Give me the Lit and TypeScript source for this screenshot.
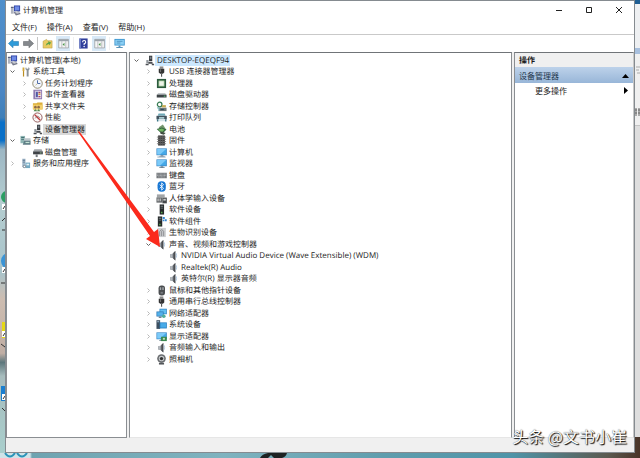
import { LitElement, html, css, svg, nothing } from "lit";
import { customElement, property } from "lit/decorators.js";
import { classMap } from "lit/directives/class-map.js";

/* Every glyph is drawn on a 12 x 12 grid. */
const speaker = svg`<path d="M2.500 4.500 5 4 8 1V11.500L5 8.800 2.500 8.300z" fill="#777b80"/><path d="M6 3 8 1V11.500L6 9.500z" fill="#4b4e52"/><path d="M2.500 4.500 5 4v4.800L2.500 8.300z" fill="#b4b9be"/><path d="M8.800 3.500q1.200 2.500 0 5" stroke="#a9c4dd" fill="none"/>`;
const usb = svg`<path d="M4 .500h4v2.500H4z" fill="#888"/><path d="M3 3h6v4L7.500 8.500h-3L3 7z" fill="#333"/><path d="M4.500 3.500h1v3h-1z" fill="#777"/><path d="M5.500 8.500h1.200v3.300H5.500z" fill="#555"/>`;
const tower = svg`<path d="M4 .500h4.800v11H4z" fill="#262a2b"/><path d="M5 2h2.800v1H5zM5 4h2.800v1H5z" fill="#7c8486"/><path d="M5.500 8.500H7V10H5.500z" fill="#58b04a"/>`;
const monitor = svg`<path d="M.500 1.500h11.300v7.500H.500z" fill="#3b87c4"/><path d="M1.300 2.300h9.700v5.900H1.300z" fill="#45a9e8"/><path d="M1.300 2.300h9.700L4.500 8.200H1.300z" fill="#7ccaf8"/><path d="M5 9h3v1h1.500v.900h-6V10H5z" fill="#6f8494"/>`;

const glyphs: Record<string, unknown> = {
  console: svg`<path d="M4.300 .500h6.700v6.500H4.300z" fill="#3247a8"/><path d="M5.300 1.500h4.700v4.300H5.300z" fill="#6f8ce6"/><path d="M1 2h3v7.500H1z" fill="#b0b4bf"/><path d="M1 2h3v1.200H1z" fill="#565d78"/><path d="M4 7.800 9 6.800l2.800 2.900L6.500 11.500z" fill="#74788a"/><path d="m6 6 4 2-1 1.500-3-.500z" fill="#c9cbd2"/>`,
  tools: svg`<path d="M2.800 1.500h2v4h-2z" fill="#d4a93c"/><path d="M3.200 5.500h1.300V11.500H3.200z" fill="#b98d22"/><path d="M6.500 1 7.300 3h1.600l.700-2 1 2.200-1.200 1.800V11.500H7.300V5L5.800 3.200z" fill="#8b9299"/>`,
  clock: svg`<circle cx="6" cy="6" r="5.200" fill="#f3f5fa" stroke="#8c8468" /><path d="M6 2.500V6h3" stroke="#3e5fa5" fill="none"/><path d="M6 6 3.800 8" stroke="#b9a75d" fill="none" stroke-width=".700"/>`,
  events: svg`<path d="M1.500 .800h9.500v10.400H1.500z" fill="#8f7bb0"/><path d="M3.500 2h6.500v8H3.500z" fill="#e3dff0"/><path d="M4.200 3h2.200v6H4.200z" fill="#5158a5"/><path d="M7 3h2.200v1.500H7zM7 7.500h2.200V9H7z" fill="#ad3f57"/><path d="M7 5h2.200v1.500H7z" fill="#d1a135"/>`,
  folder: svg`<path d="M1 2.500h4l1-1h5.500V9H1z" fill="#dcae3a"/><path d="M1 4h10.500v5.500H1z" fill="#f3cf6b"/><circle cx="3.700" cy="6.700" r="1.400" fill="#8e6a45"/><circle cx="7.200" cy="6.700" r="1.400" fill="#8e6a45"/><path d="M1.800 11.200q1.900-4.500 3.800 0zM5.500 11.200q1.700-4.500 3.400 0z" fill="#55884d"/>`,
  perf: svg`<circle cx="6" cy="6" r="5" fill="#fbf7f7" stroke="#8e5656"/><path d="m3 3 6 6" stroke="#c03b3b" stroke-width="1.500"/><path d="M3.500 7q2.500-4.500 5-.500" stroke="#7b6f6f" fill="none" stroke-width=".800"/>`,
  device: svg`<path d="M5.500 .800H9V6.800H5.500z" fill="#34373b"/><path d="M6.300 1.800h1.900v2.800H6.300z" fill="#77808a"/><path d="M2.500 5.500H5V9H2.500z" fill="#8f959b"/><path d="M1.800 9.500h3V7.500h4.500v2H11V11.200H8.500V9.500H5v1.700H1.800z" fill="#4a4d52"/>`,
  storage: svg`<path d="M.500 1h5V9H.500z" fill="#8fb5b3"/><path d="M1.300 2.200h3.300v1H1.300zM1.300 4.300h3.300v1H1.300z" fill="#467074"/><path d="M4.500 3.500h7v3h-7z" fill="#bfc8cc"/><path d="M4.500 6.300h7V10.500H3z" fill="#5f7e86"/><path d="M6 7.500h4.300v1.300H6z" fill="#c4e3d5"/>`,
  disk: svg`<path d="M2.500 2.500h8l1.300 3H1.200z" fill="#a0a4a8"/><path d="M1.200 5h10.600V8H1.200z" fill="#3f4246"/><path d="M4 8h2.200v3H4z" fill="#777b80"/><path d="M8.500 6h2v1h-2z" fill="#95c496"/>`,
  services: svg`<path d="M2.500 .800H6v9H2.500z" fill="#a0b6c9"/><path d="M3 2h2.500v1H3zM3 4h2.500v1H3z" fill="#5e7890"/><path d="M6 5h5v6H6z" fill="#74a9c2"/><path d="M7 6.200h3V8H7z" fill="#e2f1f6"/><circle cx="4.800" cy="9.300" r="2" fill="#8b9aa5"/><circle cx="4.800" cy="9.300" r=".800" fill="#fff"/>`,
  usb,
  cpu: svg`<path d="M1 1h10v10H1z" fill="#2b5a3d"/><path d="M3 3h6v6H3z" fill="#edf4e8" stroke="#71a36e" stroke-width=".700"/>`,
  drive: svg`<path d="M2.300 4.500h7.700l1.500 2H.800z" fill="#b2b7ba"/><path d="M.800 6.300h10.700V9.300H.800z" fill="#3c4245"/><path d="M8.500 7.300h1.800v1H8.500z" fill="#5fd07c"/>`,
  controller: svg`<circle cx="4" cy="3.800" r="2.500" fill="none" stroke="#3a7d55" stroke-width="1.400"/><path d="M3.500 7.300h8V11h-8z" fill="#6d787c"/><path d="M6.500 4.500h4.300v2.500H6.500z" fill="#c5aa53"/><path d="M5 8.600h3.500v1.100H5z" fill="#29445a"/><path d="M1.200 7.500h2V11" stroke="#58a3a8" fill="none"/>`,
  printer: svg`<path d="M2.800 1.500h6.700l1 2.700H1.800z" fill="#6fa9b7"/><path d="M.500 4.200h11.300V8H.500z" fill="#43545f"/><path d="M3.300 5.700h5.700v1.500H3.300z" fill="#c7edf1"/><path d="M3 7.500h6.500l1 2.700H2z" fill="#d7e6ec"/><path d="M1 8h1.500v2.300H1zM9.900 8h1.500v2.300H9.900z" fill="#3d7585"/>`,
  battery: svg`<path d="m3 3.500 4.500-3 3.500 5.500-4.500 4z" fill="#75966e"/><path d="m.800 5.500 5.700-1.800 5 2.300-5 5z" fill="#33643f"/><path d="m2.200 6 4.300-1 2.700 1.200-3 3.200z" fill="#72b562"/><path d="m5 8 5.500 1.800-2 2L4.800 10.500z" fill="#424d42"/>`,
  firmware: svg`<path d="M2.300 .500h7.400v11H2.300z" fill="#3a3a3a"/><path d="M1 2.300h10M1 4.700h10M1 7.100h10M1 9.500h10" stroke="#777" stroke-width=".900"/><path d="M4.200 1h1v10h-1zM6.800 1h1v10h-1z" fill="#5c5c5c"/>`,
  computer: svg`${monitor}<path d="M1.500 10.300h9v1.300h-9z" fill="#a7b8c4"/>`,
  monitor,
  keyboard: svg`<path d="M.500 3h11.300v6H.500z" fill="#75797c"/><path d="M1.300 4.400h9.700M1.300 6h9.700M2.500 7.600h7.300" stroke="#c9cdd0" stroke-width=".700" stroke-dasharray="1 .500"/>`,
  bluetooth: svg`<rect x="1.700" y=".300" width="9" height="11.400" rx="4.400" fill="#1a78d4"/><path d="M4 4l4.300 4L6.200 10V2l2.100 2L4 8" stroke="#fff" stroke-width=".900" fill="none"/>`,
  hid: svg`<path d="M1 1.500h8.500v3.300H1z" fill="#a2a5a8"/><path d="M.500 4.800h6.500v5.700H.500z" fill="#66696c"/><path d="M1.700 6h1.100v3H1.700zM4 6h1.100v3H4z" fill="#ddd"/><path d="M7 5h4.800v6.300H7z" fill="#46494c"/><path d="M8 6.300h2.700v2H8z" fill="#c9ccce"/>`,
  software: tower,
  component: svg`<g transform="translate(-2 0)">${tower}</g><path d="M7.300 1h2.300v2.300H7.300zM9.500 3.500h2.200v2.200H9.500z" fill="#3888d1"/><path d="M7.300 4h1.700v1.700H7.300z" fill="#3888d1"/>`,
  biometric: svg`<path d="M1.800 1h9v10h-9z" fill="#cfd1d3"/><path d="M4 10V5q2.200-4 4.400 0v5M6.200 4.500V10" stroke="#85888b" fill="none"/>`,
  speaker,
  mouse: svg`<rect x="2.800" y=".600" width="7" height="10.900" rx="3" fill="#4a4d50"/><path d="M4.200 2.500h1.500v3H4.200zM6.900 2.500h1.500v3H6.900z" fill="#a5aaae"/><path d="M5 7.500h2.500V9.500H5z" fill="#777b7f"/>`,
  network: svg`<path d="M3.800 .800h8v6h-8z" fill="#3285c3"/><path d="M4.600 1.600h6.400v4.400H4.600z" fill="#62c0f2"/><path d="M.500 3.800h7.800v5.500H.500z" fill="#2d78b5"/><path d="M1.300 4.600h6.200v3.900H1.300z" fill="#54b2ea"/><path d="M3 9.300h3v1.500H3z" fill="#66798a"/><circle cx="8.500" cy="9" r="2" fill="#4fae9a"/>`,
  system: svg`<path d="M.500 1.300H4.500v9.500H.500z" fill="#3d4f60"/><path d="M1.300 2.500h2.200v1H1.300z" fill="#a6c5dc"/><path d="M4 3.700h7.800v6.600H4z" fill="#277fc0"/><path d="M4.800 4.500h6.200v4.900H4.800z" fill="#48abe8"/>`,
  display: svg`${monitor}<path d="M5.500 6.300h6.300v4.700H5.500z" fill="#39894f"/><path d="M7.500 7.500h2.200v2H7.500z" fill="#bfe0bc"/>`,
  camera: svg`<circle cx="6" cy="5" r="4.700" fill="#6a6d70"/><circle cx="6" cy="5" r="3" fill="#c6c9cb"/><circle cx="6" cy="5" r="1.800" fill="#333"/><path d="M3.200 9.800h5.600v1.700H3.200z" fill="#53565a"/>`,
  back: svg`<path d="M.500 6 5.500 1.300V3.800h6v4.400h-6v2.500z" fill="#2f9bd9" stroke="#2277ad" stroke-width=".600"/>`,
  forward: svg`<path d="M11.500 6 6.500 1.300V3.800h-6v4.400h6v2.500z" fill="#85898d" stroke="#606366" stroke-width=".600"/>`,
  up: svg`<path d="M1.200 3.500 5 1.500l1 1.500h5V11H1.200z" fill="#e9cb62" stroke="#b99c48" stroke-width=".600"/><path d="M4 8.500q.500-3 3-3.500L6.500 3.500 10 5 8 7.800l-.500-1.300Q5.500 7 4 8.500z" fill="#5ba34c"/>`,
  panel: svg`<path d="M.800 1.500h10.600v9.300H.800z" fill="#f5f5f5" stroke="#8b8f92" stroke-width=".700"/><path d="M.800 1.500h10.600v2H.800z" fill="#9ba4ab"/><path d="M4.200 3.500v7M8.500 3.500v7" stroke="#a0a4a7" stroke-width=".700"/><path d="M5 7l2-1.700v3.400z" fill="#459445"/>`,
  help: svg`<path d="M1.500 .500h9v11h-9z" fill="#303f9b"/><path d="M1.500 .500H3.200v11H1.500z" fill="#7080c9"/><path d="M5 4.500q0-1.800 1.700-1.800T8.400 4.500Q8.400 5.500 6.700 6.300v1.400" stroke="#fff" stroke-width="1.200" fill="none"/><circle cx="6.700" cy="9.300" r=".800" fill="#fff"/>`,
  scan: svg`<path d="M.500 1h11.200v7.200H.500z" fill="#3590cc"/><path d="M1.400 1.900h9.400v5.400H1.400z" fill="#8acff4"/><path d="M3 3.600h6.300M3 5.500h4" stroke="#3e84b5" stroke-width=".800"/><path d="M5 8.200h2v1.500h2.500v1.200h-7V9.700H5z" fill="#5a93b8"/>`,
};

const icon = (name: string) =>
  html`<svg class="icon" viewBox="0 0 12 12" aria-hidden="true">${glyphs[name]}</svg>`;

type Node = [level: number, state: "open" | "closed" | "leaf", icon: string, label: string, selected?: string];

const consoleTree: Node[] = [
  [0, "leaf", "console", "计算机管理(本地)"],
  [1, "open", "tools", "系统工具"],
  [2, "closed", "clock", "任务计划程序"],
  [2, "closed", "events", "事件查看器"],
  [2, "closed", "folder", "共享文件夹"],
  [2, "closed", "perf", "性能"],
  [2, "leaf", "device", "设备管理器", "gray"],
  [1, "open", "storage", "存储"],
  [2, "leaf", "disk", "磁盘管理"],
  [1, "closed", "services", "服务和应用程序"],
];

const deviceTree: Node[] = [
  [1, "open", "device", "DESKTOP-EQEQF94", "blue"],
  [2, "closed", "usb", "USB 连接器管理器"],
  [2, "closed", "cpu", "处理器"],
  [2, "closed", "drive", "磁盘驱动器"],
  [2, "closed", "controller", "存储控制器"],
  [2, "closed", "printer", "打印队列"],
  [2, "closed", "battery", "电池"],
  [2, "closed", "firmware", "固件"],
  [2, "closed", "computer", "计算机"],
  [2, "closed", "monitor", "监视器"],
  [2, "closed", "keyboard", "键盘"],
  [2, "closed", "bluetooth", "蓝牙"],
  [2, "closed", "hid", "人体学输入设备"],
  [2, "closed", "software", "软件设备"],
  [2, "closed", "component", "软件组件"],
  [2, "closed", "biometric", "生物识别设备"],
  [2, "open", "speaker", "声音、视频和游戏控制器"],
  [3, "leaf", "speaker", "NVIDIA Virtual Audio Device (Wave Extensible) (WDM)"],
  [3, "leaf", "speaker", "Realtek(R) Audio"],
  [3, "leaf", "speaker", "英特尔(R) 显示器音频"],
  [2, "closed", "mouse", "鼠标和其他指针设备"],
  [2, "closed", "usb", "通用串行总线控制器"],
  [2, "closed", "network", "网络适配器"],
  [2, "closed", "system", "系统设备"],
  [2, "closed", "display", "显示适配器"],
  [2, "closed", "speaker", "音频输入和输出"],
  [2, "closed", "camera", "照相机"],
];

const iconStyles = css`
  .icon { display: block; width: 11px; height: 11px; flex: none; }
`;

@customElement("tree-view")
export class TreeView extends LitElement {
  @property({ attribute: false }) nodes: Node[] = [];

  static styles = [
    iconStyles,
    css`
      :host { display: block; }
      ul { margin: 0; padding: 0; list-style: none; }
      .row { display: flex; align-items: center; height: 11px; white-space: nowrap; }
      .row:nth-child(odd) { height: 12px; }
      .level1 { padding-left: 2px; }
      .level2 { padding-left: 14px; }
      .level3 { padding-left: 26px; }
      .chevron { width: 7px; height: 7px; flex: none; margin-right: 4px; fill: none; stroke: #b8b8b8; }
      .open .chevron { stroke: #666; }
      .level0 .chevron { display: none; }
      .label { padding: 0 1px 0 2px; line-height: 11px; }
      .blue { background: #cce8ff; }
      .gray { background: #d9d9d9; }
    `,
  ];

  render() {
    return html`<ul role="tree">
      ${this.nodes.map(
        ([level, state, name, label, selected]) => html`<li
          role="treeitem"
          class=${classMap({ row: true, [`level${level}`]: true, [state]: true })}
        >
          <svg class="chevron" viewBox="0 0 7 7" aria-hidden="true">
            ${state === "open" ? svg`<path d="m1.500 2.500 2 2 2-2"/>` : state === "closed" ? svg`<path d="m2.500 1.500 2 2-2 2"/>` : nothing}
          </svg>
          ${icon(name)}
          <span class=${classMap({ label: true, blue: selected === "blue", gray: selected === "gray" })}>${label}</span>
        </li>`,
      )}
    </ul>`;
  }
}

@customElement("app-root")
export class AppRoot extends LitElement {
  static styles = [
    iconStyles,
    css`
      :host {
        position: relative;
        display: flex;
        flex-direction: column;
        box-sizing: border-box;
        min-height: 100vh;
        padding: 0 5px 5px;
        overflow: hidden;
        font: 8px/11px "Open Sans", "Noto Sans CJK SC", sans-serif;
        text-rendering: geometricPrecision;
        color: #1c1c1c;
        background: linear-gradient(90deg, #cfe3e8 0 30px, #6ea3b0 32px, #7fb3bf 35%, #5f9dad 60%, #4f94a8 80%, #5b5a50 95%, #4a3428);
      }
      button { margin: 0; padding: 0; border: 0; background: none; font: inherit; color: inherit; }
      .desktop { position: absolute; left: 0; top: 0; bottom: 5px; width: 5px; background: linear-gradient(#4f8fcb 0, #4a86c4 20%, #3f7fb8 26%, #0a70c8 27% 31%, #9db7c4 33%, #b4cdd0 45%, #a9c4cb 60%, #cdbdb1 66%, #c0aea4 78%, #5d777c 80%, #a7bcbd 83%, #a9cfcd 100%); }
      .shortcuts { position: absolute; left: 0; top: 190px; width: 5px; height: 240px; }
      .wallpaper { position: absolute; left: 0; bottom: 0; width: 300px; height: 5px; }
      .behind { position: absolute; right: 0; top: 0; width: 5px; height: 437px; overflow: hidden; background: linear-gradient(#1f5f94 0 4px, #eef0f2 4px 48px, #a8c0de 48px 54px, #f0f0f0 54px 125px, #dedede 125px); }
      .behind svg { display: block; width: 5px; height: 130px; fill: none; stroke: #666; }
      .window { position: relative; flex: 1; display: flex; flex-direction: column; box-sizing: border-box; border: 1px solid #858b90; background: #fff; }
      .titlebar { display: flex; align-items: center; height: 18px; padding-left: 4px; }
      .title { flex: 1; margin: 0; padding-left: 2px; font: inherit; }
      .caption { display: flex; align-items: center; justify-content: center; width: 30px; height: 18px; }
      .caption svg { width: 8px; height: 8px; fill: none; stroke: #222; }
      .menu { display: flex; gap: 10px; height: 15px; padding-left: 6px; border-bottom: 1px solid #c9c9c9; }
      .toolbar { display: flex; align-items: center; gap: 3px; height: 17px; padding-left: 1px; }
      .tool { display: flex; align-items: center; justify-content: center; width: 12px; height: 15px; }
      .wide { width: 14px; }
      .pressed { background: #d8e9f7; }
      .rule { width: 1px; height: 13px; background: #c4c4c4; }
      .faint { background: #f0f0f0; }
      .panes { flex: 1; display: grid; grid-template-columns: 121px minmax(0, 1fr) 120px; gap: 2px; background: #f0f0f0; }
      .pane { background: #fff; border: 1px solid #8a8e92; border-top-color: #707478; }
      .tree { padding-top: 1px; }
      .devices { padding-left: 1px; border-bottom-color: #e6e6e6; }
      .actions { border-bottom-color: #e6e6e6; border-right-color: #c8c8c8; }
      .actions h2 { margin: 0; padding: 0 4px; height: 14px; font: bold 8px/15px "Open Sans", "Noto Sans CJK SC", sans-serif; background: #f0f0f0; }
      .group { display: flex; align-items: center; justify-content: space-between; width: 100%; height: 16px; padding: 0 4px; background: linear-gradient(#bdd2ea, #98b6d8); color: #23364c; }
      .more { display: flex; align-items: center; justify-content: space-between; width: 100%; height: 15px; padding: 0 4px 0 20px; }
      .mark { width: 7px; height: 7px; fill: #000; }
      .status { height: 14px; background: #f0f0f0; }
      .arrow { position: absolute; left: 72px; top: 130px; width: 90px; height: 118px; fill: #fb2a1c; }
      .watermark { position: absolute; right: 7px; bottom: 4px; margin: 0; font: 16px/24px "Noto Sans CJK SC", sans-serif; color: #fff; text-shadow: 1px 1px 1px #000, 0 0 1px #444; white-space: nowrap; }
    `,
  ];

  render() {
    return html`
      <div class="desktop"></div>
      <svg class="shortcuts" viewBox="0 0 5 240" aria-hidden="true">
        <circle cx="7" cy="7" r="6" fill="#2b9d63"/><circle cx="9" cy="71" r="8" fill="#3a94d6"/>
        <path d="M2 132h3v16H2z" fill="#e5d816"/><path d="M1 196h4v15H1z" fill="#1a7fd0"/>
        <path d="M2 14h3v6H2zM2 77h3v6H2zM2 141h3v6H2zM2 204h3v6H2z" fill="#fff"/>
        <path d="m3 19 2-3M3 82l2-3M3 146l2-3M3 209l2-3M2 31l3-3M2 40h3M1 93h4M1 154l4 3M2 218l3 3" stroke="#333"/>
      </svg>
      <svg class="wallpaper" viewBox="0 0 300 5" aria-hidden="true">
        <path d="M5 0q5 7 10 0M17 0q5 7 10 0" stroke="#2a93b8" stroke-width="2" fill="none"/>
        <path d="M260 5q2-4 8-5h19q-1 4-5 5h-8l-3-3-3 3z" fill="#1d2222"/>
      </svg>
      <div class="behind">
        <svg viewBox="0 0 5 130" aria-hidden="true">
          <path d="M1 67h4M1 70h3M2 73h3" stroke="#aaa"/>
          <path d="M0 110h2M1 108v8M0 113h2M3 110h2M3 113h2M4 108v8"/>
          <path d="M0 125.500h5" stroke="#c4c4c4"/>
        </svg>
      </div>
      <main class="window">
        <header class="titlebar">
          ${icon("console")}
          <h1 class="title">计算机管理</h1>
          <button class="caption" aria-label="最小化"><svg viewBox="0 0 8 8"><path d="M1 4.500h6"/></svg></button>
          <button class="caption" aria-label="最大化"><svg viewBox="0 0 8 8"><path d="M1.500 1.500h5v5h-5z"/></svg></button>
          <button class="caption" aria-label="关闭"><svg viewBox="0 0 8 8"><path d="m1 1 6 6M7 1 1 7"/></svg></button>
        </header>
        <nav class="menu">
          ${["文件(F)", "操作(A)", "查看(V)", "帮助(H)"].map((m) => html`<button>${m}</button>`)}
        </nav>
        <div class="toolbar" role="toolbar">
          <button class="tool" aria-label="后退">${icon("back")}</button>
          <button class="tool" aria-label="前进">${icon("forward")}</button>
          <span class="rule"></span>
          <button class="tool" aria-label="上一级">${icon("up")}</button>
          <button class="tool wide pressed" aria-label="控制台树">${icon("panel")}</button>
          <span class="rule faint"></span>
          <button class="tool" aria-label="帮助">${icon("help")}</button>
          <button class="tool wide pressed" aria-label="操作窗格">${icon("panel")}</button>
          <span class="rule faint"></span>
          <button class="tool" aria-label="扫描硬件改动">${icon("scan")}</button>
        </div>
        <div class="panes">
          <section class="pane tree"><tree-view .nodes=${consoleTree}></tree-view></section>
          <section class="pane tree devices"><tree-view .nodes=${deviceTree}></tree-view></section>
          <aside class="pane actions">
            <h2>操作</h2>
            <button class="group">设备管理器<svg class="mark" viewBox="0 0 7 7"><path d="M0 6h7L3.500 2z"/></svg></button>
            <button class="more">更多操作<svg class="mark" viewBox="0 0 7 7"><path d="M2 0v7l4-3.500z"/></svg></button>
          </aside>
        </div>
        <footer class="status"></footer>
        <svg class="arrow" viewBox="0 0 90 118" aria-hidden="true"><path d="M0 1 1 0 76 101 80 98 82 116 68 108 72 105z"/></svg>
        <p class="watermark">头条 @文书小崔</p>
      </main>
    `;
  }
}
